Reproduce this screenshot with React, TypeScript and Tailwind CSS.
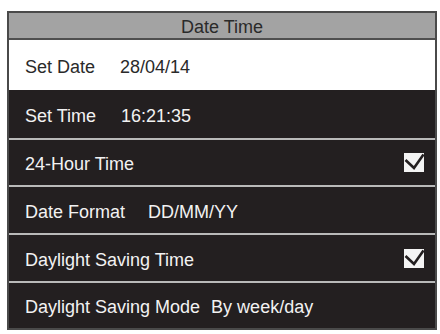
import React from 'react'

// ── CheckMark ─────────────────────────────────────────────────────────────
function CheckMark() {
  return (
    <svg width="20" height="19" viewBox="0 0 20 19" className="block">
      <rect x="0" y="0" width="20" height="19" fill="#f4f4f4" />
      <polyline points="1.5,7 10,15 19.5,1.5" fill="none" stroke="#231f20" strokeWidth="2.6" strokeLinejoin="miter" />
    </svg>
  )
}

// ── Row ───────────────────────────────────────────────────────────────────
interface RowProps {
  label: string
  value?: string
  gap?: string
  checked?: boolean
  selected?: boolean
  first?: boolean
  height: string
}

function Row({ label, value, gap = 'gap-[25px]', checked, selected, first, height }: RowProps) {
  return (
    <div
      className={[
        'flex items-center justify-between pl-4 pr-[11px]',
        height,
        selected ? 'bg-white text-[#2a2a2a]' : 'bg-[#231f20] text-[#f2f2f2]',
        !selected && !first ? 'border-t-2 border-[#b9b9b9]' : '',
      ].join(' ')}>
      <div className={'flex items-center pt-[3px] ' + gap}>
        <span>{label}</span>
        {value && <span>{value}</span>}
      </div>
      {checked && <CheckMark />}
    </div>
  )
}

export default function App() {
  return (
    <div className="w-[440px] h-[334px] bg-white pt-[11px] pl-[7px]" style={{ fontFamily: '"Liberation Sans", Arial, sans-serif' }}>
      <div className="w-[430px] h-[319px] border-2 border-[#4a4a4a] flex flex-col text-[18px] leading-none">
        <div className="h-[27px] shrink-0 bg-[#a3a3a3] border-b-2 border-[#4f4f4f] flex items-center justify-center text-[#2a2a2a] pt-[2px]">
          Date Time
        </div>
        <Row label="Set Date" value="28/04/14" selected height="h-[50px]" />
        <Row label="Set Time" value="16:21:35" first height="h-[48px]" />
        <Row label="24-Hour Time" checked height="h-[47px]" />
        <Row label="Date Format" value="DD/MM/YY" gap="gap-[23px]" height="h-[48px]" />
        <Row label="Daylight Saving Time" checked height="h-[48px]" />
        <Row label="Daylight Saving Mode" value="By week/day" gap="gap-[11px]" height="flex-1" />
      </div>
    </div>
  )
}
